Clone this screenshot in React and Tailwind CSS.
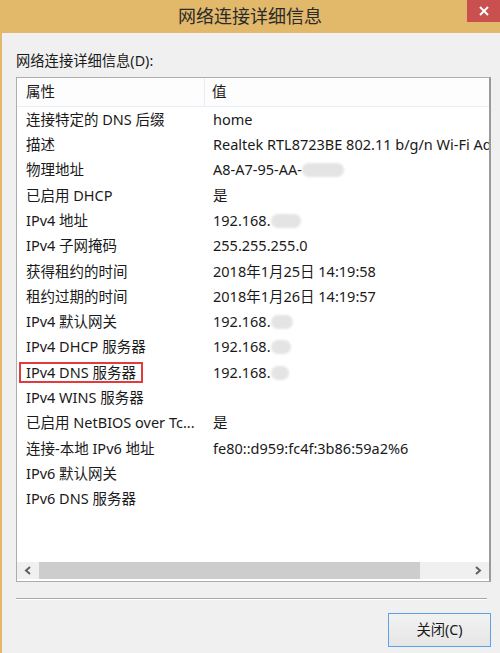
import React from 'react';

const rows = [
  { name: '连接特定的 DNS 后缀', value: 'home' },
  { name: '描述', value: 'Realtek RTL8723BE 802.11 b/g/n Wi-Fi Adapter' },
  { name: '物理地址', value: 'A8-A7-95-AA-', blur: 'w-[42px]' },
  { name: '已启用 DHCP', value: '是' },
  { name: 'IPv4 地址', value: '192.168.', blur: 'w-[30px]' },
  { name: 'IPv4 子网掩码', value: '255.255.255.0' },
  { name: '获得租约的时间', value: '2018年1月25日 14:19:58' },
  { name: '租约过期的时间', value: '2018年1月26日 14:19:57' },
  { name: 'IPv4 默认网关', value: '192.168.', blur: 'w-[22px]' },
  { name: 'IPv4 DHCP 服务器', value: '192.168.', blur: 'w-[20px]' },
  { name: 'IPv4 DNS 服务器', value: '192.168.', blur: 'w-[18px]', mark: true },
  { name: 'IPv4 WINS 服务器', value: '' },
  { name: '已启用 NetBIOS over Tc...', value: '是' },
  { name: '连接-本地 IPv6 地址', value: 'fe80::d959:fc4f:3b86:59a2%6' },
  { name: 'IPv6 默认网关', value: '' },
  { name: 'IPv6 DNS 服务器', value: '' },
];

export default function App() {
  return (
    <div
      className="w-[500px] h-[653px] overflow-hidden bg-[#f0f0f0] text-[14.5px] text-[#1a1a1a] flex flex-col"
      style={{ fontFamily: '"Noto Sans", "Noto Sans CJK SC", sans-serif' }}
    >
      {/* Title bar */}
      <div className="h-[33px] shrink-0 bg-[#e2b86a] flex items-start relative">
        <div className="flex-1 text-center text-[18px] leading-[33px] text-[#2b2b2b]">网络连接详细信息</div>
        <div className="absolute right-0 top-0 w-[33px] h-[22px] bg-[#c9504f] flex items-center justify-center">
          <svg width="10" height="10" viewBox="0 0 10 10">
            <path d="M1 1 L9 9 M9 1 L1 9" stroke="white" strokeWidth="2" />
          </svg>
        </div>
      </div>

      <div className="flex-1 flex border-l-[2px] border-[#e2b86a]">
        <div className="w-[489px] flex flex-col pl-[14px]">
          <div className="h-[44px] flex items-end pb-[6px] text-[14.3px]">网络连接详细信息(D):</div>

          {/* List view */}
          <div className="w-[475px] h-[505px] flex flex-col bg-white border border-[#adadad] border-r-[2px] border-r-[#9a9a9a] overflow-hidden">
            <div className="h-[29px] shrink-0 flex border-b border-[#e8eef6] bg-[#fdfdfd]">
              <div className="w-[188px] pl-[9px] flex items-center border-r border-[#e8edf3]">属性</div>
              <div className="flex-1 pl-[7px] flex items-center">值</div>
            </div>

            <div className="flex-1 overflow-hidden">
              {rows.map((r) => (
                <div key={r.name} className="h-[25.3px] flex items-center whitespace-nowrap">
                  <div className="w-[188px] shrink-0 pl-[9px] flex items-center">
                    {r.mark ? (
                      <span className="-ml-[7px] pl-[5px] pr-[5px] border-[2px] border-[#e23b3b] leading-[17px]">
                        {r.name}
                      </span>
                    ) : (
                      <span>{r.name}</span>
                    )}
                  </div>
                  <div className="flex-1 min-w-0 pl-[8px] flex items-center overflow-hidden">
                    <span>{r.value}</span>
                    {r.blur && <span className={`${r.blur} shrink-0 h-[14px] bg-[#e4e4e4] rounded-full blur-[1px]`} />}
                  </div>
                </div>
              ))}
            </div>

            {/* Horizontal scrollbar */}
            <div className="h-[17px] shrink-0 flex items-stretch bg-[#f0f0f0] mb-[2px]">
              <div className="w-[22px] flex items-center justify-center">
                <svg width="8" height="9" viewBox="0 0 8 9">
                  <path d="M6 1 L2 4.5 L6 8" stroke="#606060" strokeWidth="2" fill="none" />
                </svg>
              </div>
              <div className="w-[381px] bg-[#cdcdcd]" />
              <div className="flex-1" />
              <div className="w-[22px] flex items-center justify-center">
                <svg width="8" height="9" viewBox="0 0 8 9">
                  <path d="M2 1 L6 4.5 L2 8" stroke="#606060" strokeWidth="2" fill="none" />
                </svg>
              </div>
            </div>
          </div>

          <div className="mt-[16px] h-[1px] bg-[#a7a7a7] w-[471px]" />
          <div className="h-[1px] bg-white w-[471px]" />

          <div className="flex justify-end mt-[13px] w-[475px]">
            <button className="w-[103px] h-[34px] border border-[#5ba2e8] bg-gradient-to-b from-[#f2f2f2] to-[#e6e6e6] text-[14.3px] text-[#1a1a1a]">
              关闭(C)
            </button>
          </div>
        </div>
      </div>
    </div>
  );
}
